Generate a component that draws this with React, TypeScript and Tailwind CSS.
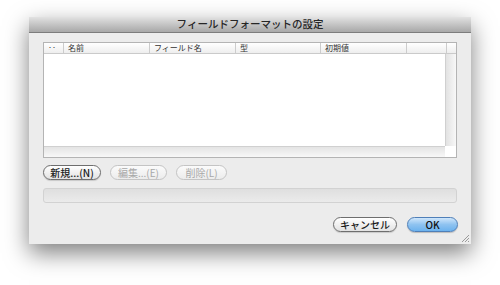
const FONT = "font-['Lucida_Grande','Noto_Sans_CJK_JP',sans-serif]";

const columns = [
  { label: "‥", w: "w-[20px]" },
  { label: "名前", w: "w-[86px]" },
  { label: "フィールド名", w: "w-[86px]" },
  { label: "型", w: "w-[85px]" },
  { label: "初期値", w: "w-[86px]" },
];

function PillButton({
  label,
  disabled,
  className = "",
}: {
  label: string;
  disabled?: boolean;
  className?: string;
}) {
  return (
    <button
      className={
        "h-[15px] rounded-full border flex items-center justify-center text-[10px] leading-none " +
        (disabled
          ? "border-[#c4c4c4] bg-gradient-to-b from-[#fbfbfb] to-[#ececec] text-[#a8a8a8] "
          : "border-[#6e6e6e] bg-gradient-to-b from-white to-[#e2e2e2] text-[#1a1a1a] font-medium shadow-[0_1px_1px_rgba(0,0,0,0.15)] ") +
        className
      }
    >
      {label}
    </button>
  );
}

export default function App() {
  return (
    <div className={`w-[500px] h-[285px] bg-white overflow-hidden ${FONT}`}>
      <div className="ml-[29px] mt-[17px] w-[442px] h-[227px] flex flex-col bg-[#ececec] shadow-[0_9px_22px_rgba(0,0,0,0.5)]">
        {/* title bar */}
        <div className="h-[16px] shrink-0 bg-gradient-to-b from-[#e2e2e2] to-[#a8a8a8] border-b border-[#7c7c7c] flex items-center justify-center">
          <span className="text-[10.5px] leading-none text-[#262626] font-medium">フィールドフォーマットの設定</span>
        </div>

        <div className="flex-1 flex flex-col px-[14px] pt-[9px] relative">
          {/* table */}
          <div className="w-[414px] h-[116px] border border-[#b4b4b4] bg-white flex flex-col">
            <div className="h-[11px] shrink-0 flex bg-gradient-to-b from-white to-[#eeeeee] border-b border-[#cacaca]">
              {columns.map((c) => (
                <div
                  key={c.label}
                  className={`${c.w} h-full border-r border-[#cccccc] pl-[4px] flex items-center text-[8px] leading-none text-[#333]`}
                >
                  {c.label}
                </div>
              ))}
              <div className="w-[40px] h-full border-r border-[#cccccc]" />
            </div>
            <div className="flex-1 flex">
              <div className="flex-1 flex flex-col">
                <div className="flex-1" />
                <div className="h-[11px] bg-gradient-to-b from-[#e4e4e4] to-[#f8f8f8] border-t border-[#d0d0d0]" />
              </div>
              <div className="w-[11px] flex flex-col">
                <div className="flex-1 bg-gradient-to-r from-[#e2e2e2] to-[#f8f8f8] border-l border-[#d0d0d0]" />
                <div className="h-[11px] bg-white" />
              </div>
            </div>
          </div>

          {/* button row */}
          <div className="flex gap-[9px] mt-[7px]">
            <PillButton label="新規...(N)" className="w-[58px]" />
            <PillButton label="編集...(E)" disabled className="w-[57px]" />
            <PillButton label="削除(L)" disabled className="w-[51px]" />
          </div>

          {/* progress field */}
          <div className="w-[414px] h-[15px] mt-[8px] rounded-[3px] border border-[#d2d2d2] bg-gradient-to-b from-[#dfdfdf] to-[#ebebeb]" />

          {/* dialog buttons */}
          <div className="flex justify-end gap-[10px] mt-[14px] w-[415px]">
            <PillButton label="キャンセル" className="w-[64px]" />
            <button className="w-[51px] h-[15px] rounded-full border border-[#4f7fb8] bg-gradient-to-b from-[#cfe6fb] via-[#8fc3f0] to-[#6cb2ee] text-[10px] leading-none text-[#111] font-medium flex items-center justify-center shadow-[0_1px_1px_rgba(0,0,0,0.2)]">
              OK
            </button>
          </div>

          {/* resize grip */}
          <svg className="absolute right-[1px] bottom-[1px]" width="10" height="10" viewBox="0 0 10 10">
            <path d="M9 2 L2 9 M9 5 L5 9 M9 8 L8 9" stroke="#9a9a9a" strokeWidth="1" />
          </svg>
        </div>
      </div>
    </div>
  );
}
